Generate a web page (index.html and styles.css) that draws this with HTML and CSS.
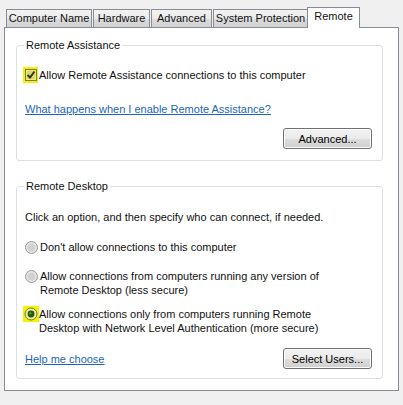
FILE: index.html
```html
<!DOCTYPE html>
<html lang="en">
<head>
    <meta charset="UTF-8">
    <title>System Properties - Remote</title>
    <link rel="stylesheet" href="styles.css">
</head>
<body>

<div class="dialog">
    <div class="tabs">
        <div class="tab tab-name">Computer Name</div>
        <div class="tab tab-hw">Hardware</div>
        <div class="tab tab-adv">Advanced</div>
        <div class="tab tab-sys">System Protection</div>
        <div class="tab tab-remote active">Remote</div>
    </div>

    <div class="panel">
        <fieldset class="group group-assist">
            <legend>Remote Assistance</legend>
            <label class="option check-row">
                <span class="mark">
                    <svg width="15" height="16" viewBox="0 0 15 16">
                        <rect x="0" y="0" width="15" height="16" fill="#f4f000"/>
                        <rect x="2.5" y="2.5" width="11" height="11" fill="#eeeb8c" stroke="#7d7c3a"/>
                        <rect x="4" y="4" width="8" height="8" fill="#dcd86a"/>
                        <path d="M4.5 8 L7 10.5 L11.5 4.5" fill="none" stroke="#2f3620" stroke-width="2"/>
                    </svg>
                </span>
                <span>Allow Remote Assistance connections to this computer</span>
            </label>
            <a class="link link-assist" href="#">What happens when I enable Remote Assistance?</a>
            <div class="actions">
                <button class="btn">Advanced...</button>
            </div>
        </fieldset>

        <fieldset class="group group-desktop">
            <legend>Remote Desktop</legend>
            <p class="hint">Click an option, and then specify who can connect, if needed.</p>

            <label class="option radio-row radio-first">
                <span class="mark">
                    <svg width="15" height="15" viewBox="0 0 15 15">
                        <circle cx="7.5" cy="7.5" r="6" fill="#e6e6e6" stroke="#9a9a9a"/>
                        <circle cx="7.5" cy="7.5" r="4" fill="#d2d2d2"/>
                    </svg>
                </span>
                <span>Don't allow connections to this computer</span>
            </label>

            <label class="option radio-row">
                <span class="mark">
                    <svg width="15" height="15" viewBox="0 0 15 15">
                        <circle cx="7.5" cy="7.5" r="6" fill="#e6e6e6" stroke="#9a9a9a"/>
                        <circle cx="7.5" cy="7.5" r="4" fill="#d2d2d2"/>
                    </svg>
                </span>
                <span>Allow connections from computers running any version of<br>Remote Desktop (less secure)</span>
            </label>

            <label class="option radio-row radio-last">
                <span class="mark">
                    <svg width="16" height="16" viewBox="0 0 16 16">
                        <rect x="0" y="0" width="16" height="16" fill="#f4f000"/>
                        <circle cx="8" cy="8" r="6" fill="#ecea9a" stroke="#7e7d40"/>
                        <circle cx="8" cy="8" r="3.4" fill="#1f5a10"/>
                        <circle cx="7.3" cy="7.2" r="1.3" fill="#4f9a2c"/>
                    </svg>
                </span>
                <span>Allow connections only from computers running Remote<br>Desktop with Network Level Authentication (more secure)</span>
            </label>

            <div class="actions actions-split">
                <a class="link" href="#">Help me choose</a>
                <button class="btn">Select Users...</button>
            </div>
        </fieldset>
    </div>
</div>

</body>
</html>
```

FILE: styles.css
```css
body {
    margin: 0;
    background-color: #f0f0f0;
    font-family: "Liberation Sans", Arial, sans-serif;
    font-size: 11px;
    color: #111;
}
.dialog {
    padding: 7px 5px 0 4px;
    width: 395px;
}
.tabs {
    display: flex;
    align-items: flex-end;
    padding-left: 2px;
    height: 20px;
    position: relative;
    z-index: 1;
}
.tab {
    box-sizing: border-box;
    height: 18px;
    line-height: 17px;
    text-align: center;
    white-space: nowrap;
    border: 1px solid #898c95;
    border-bottom: none;
    margin-right: 1px;
    background: linear-gradient(#f3f3f3, #ebebeb 50%, #dcdcdc 51%, #d2d2d2);
}
.tab-name { width: 86px; }
.tab-hw { width: 57px; }
.tab-adv { width: 61px; }
.tab-sys { width: 95px; margin-right: 0; }
.tab-remote { width: 53px; }
.tab.active {
    height: 21px;
    line-height: 16px;
    background: #fff;
    margin-bottom: -1px;
    margin-left: -1px;
}
.panel {
    box-sizing: border-box;
    height: 364px;
    border: 1px solid #898c95;
    background: #fff;
    padding: 10px 15px 0 11px;
}
.group {
    margin: 0;
    padding: 0 8px 0 8px;
    border: 1px solid #dbe0e3;
    border-radius: 3px;
    min-width: 0;
}
.group legend {
    padding: 0 2px;
    margin-left: -1px;
    line-height: 14px;
}
.group-assist {
    padding-bottom: 11px;
}
.group-desktop {
    margin-top: 18px;
    padding-bottom: 9px;
}
.option {
    display: flex;
    align-items: flex-start;
    line-height: 14px;
}
.option .mark {
    width: 16px;
    height: 14px;
    flex: none;
}
.option svg {
    display: block;
}
.check-row {
    margin-top: 16px;
}
.check-row .mark {
    margin-left: -2px;
}
.check-row svg {
    margin-top: -1px;
}
.radio-row {
    margin-top: 15px;
}
.radio-row .mark {
    margin-left: -1px;
}
.radio-row svg {
    margin-top: 0;
}
.radio-first {
    margin-top: 16px;
}
.radio-last {
    margin-top: 10px;
}
.radio-last .mark {
    margin-left: -2px;
}
.radio-last svg {
    margin-top: -1px;
}
.link {
    display: block;
    color: #1a66b8;
    line-height: 14px;
    text-decoration: underline;
}
.link-assist {
    margin-top: 20px;
}
.hint {
    margin: 17px 0 0 0;
    line-height: 14px;
}
.actions {
    display: flex;
    justify-content: flex-end;
    align-items: center;
    margin-top: 12px;
    padding-right: 2px;
}
.actions-split {
    justify-content: space-between;
    margin-top: 13px;
}
.btn {
    width: 89px;
    height: 21px;
    border: 1px solid #707070;
    border-radius: 3px;
    background: linear-gradient(#f2f2f2, #ebebeb 50%, #dddddd 51%, #cfcfcf);
    font-family: inherit;
    font-size: 11px;
    color: #000;
    padding: 0;
    box-shadow: inset 0 0 0 1px #fcfcfc;
}
```
